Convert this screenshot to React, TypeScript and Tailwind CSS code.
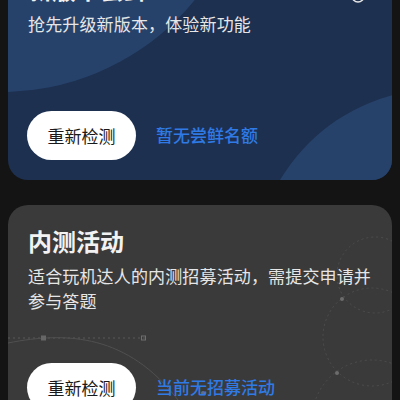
const font = { fontFamily: '"Noto Sans CJK SC", "Noto Sans", sans-serif' };

function BlueArt() {
  return (
    <svg className="absolute inset-0 w-full h-full" viewBox="0 0 384 227" fill="none">
      <circle cx="-7" cy="-111" r="250" fill="#27426a" />
      <circle cx="432" cy="322" r="186" fill="#27426a" />
      <circle cx="350" cy="43" r="6" stroke="#e8e8e8" strokeWidth="1.5" />
    </svg>
  );
}

function GrayArt() {
  return (
    <svg className="absolute inset-0 w-full h-full" viewBox="0 0 384 227" fill="none">
      <path d="M0 133H137" stroke="#585858" strokeWidth="1" strokeDasharray="2 3" />
      <path d="M0 138C60 126 120 130 170 195" stroke="#505050" strokeWidth="1" />
      <rect x="33" y="130.5" width="5" height="5" fill="#666666" />
      <rect x="133.5" y="131" width="4" height="4" stroke="#6e6e6e" strokeWidth="1" />
      <circle cx="367" cy="70" r="38" stroke="#4e4e4e" strokeDasharray="2 3" />
      <circle cx="364" cy="132" r="49" stroke="#4e4e4e" strokeDasharray="2 3" />
      <circle cx="364" cy="215" r="60" stroke="#4e4e4e" strokeDasharray="2 3" />
      <circle cx="334" cy="94" r="2" fill="#6c6c6c" />
      <circle cx="329" cy="168" r="2" fill="#6c6c6c" />
      <circle cx="195" cy="188" r="2" fill="#5f6f8a" />
    </svg>
  );
}

function BetaCard({
  title,
  desc,
  link,
  bg,
  art,
  gap,
}: {
  title: string;
  desc: string;
  link: string;
  bg: string;
  art: React.ReactNode;
  gap: string;
}) {
  return (
    <div className={`relative overflow-hidden rounded-[20px] px-5 pt-5 pb-5 ${bg}`}>
      {art}
      <div className="relative">
        <div className="text-[24px] leading-[32px] font-semibold text-[#f2f2f2] mb-[6px]">{title}</div>
        <div className={`text-[17px] leading-[25px] tracking-[0.15px] text-[#e6e6e6] ${gap}`}>{desc}</div>
        <div className="flex items-center">
          <button className="w-[109px] h-[49px] rounded-full bg-white text-[17px] text-[#1a1a1a] -ml-px">
            重新检测
          </button>
          <span className="ml-5 -mt-px text-[17px] font-medium text-[#2f7ae5]">{link}</span>
        </div>
      </div>
    </div>
  );
}

export default function App() {
  return (
    <div className="w-[400px] h-[400px] overflow-hidden bg-[#141414]" style={font}>
      <div className="px-2 -mt-[47px] flex flex-col gap-[25px]">
        <BetaCard
          title="新版本尝鲜"
          desc="抢先升级新版本，体验新功能"
          link="暂无尝鲜名额"
          bg="bg-[#1d3050]"
          art={<BlueArt />}
          gap="mb-[75px]"
        />
        <BetaCard
          title="内测活动"
          desc="适合玩机达人的内测招募活动，需提交申请并参与答题"
          link="当前无招募活动"
          bg="bg-[#3a3a3a]"
          art={<GrayArt />}
          gap="mb-[50px]"
        />
      </div>
    </div>
  );
}
